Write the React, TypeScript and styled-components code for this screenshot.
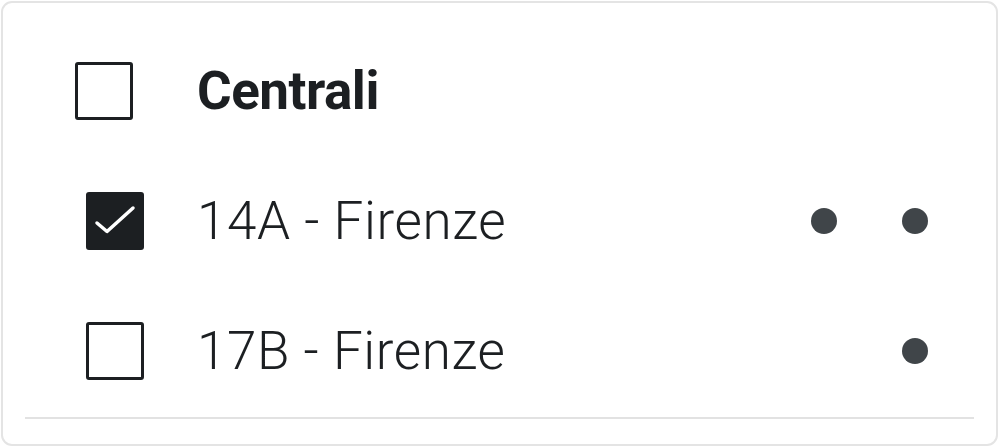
import React from "react";
import styled, { createGlobalStyle } from "styled-components";

const GlobalStyle = createGlobalStyle`
  html, body {
    margin: 0;
    padding: 0;
    background: #ffffff;
  }
  body {
    font-family: Roboto, "Noto Sans", sans-serif;
    color: #1c1f22;
  }
`;

const Card = styled.div`
  box-sizing: border-box;
  width: 997px;
  height: 445px;
  margin: 1px 2px 2px 1px;
  border: 2px solid #e4e4e4;
  border-radius: 11px;
  padding-top: 59px;
  display: flex;
  flex-direction: column;
`;

const List = styled.div`
  display: flex;
  flex-direction: column;
  gap: 72px;
`;

const Row = styled.div`
  display: flex;
  align-items: center;
  height: 58px;
  padding-right: 68px;
`;

const CheckCell = styled.div<{ $indent: number }>`
  box-sizing: border-box;
  width: 194px;
  flex: none;
  padding-left: ${(p) => p.$indent}px;
  display: flex;
  align-items: center;
`;

const Box = styled.div<{ $checked?: boolean }>`
  box-sizing: border-box;
  width: 58px;
  height: 58px;
  border: 3px solid #1c1f22;
  border-radius: 3px;
  background: ${(p) => (p.$checked ? "#1c1f22" : "#ffffff")};
  display: flex;
  align-items: center;
  justify-content: center;
`;

const Label = styled.span<{ $bold?: boolean }>`
  flex: 1;
  font-size: 53px;
  line-height: 58px;
  font-weight: ${(p) => (p.$bold ? 700 : 300)};
  letter-spacing: ${(p) => (p.$bold ? "-0.5px" : "0.6px")};
  white-space: nowrap;
`;

const Dots = styled.div`
  display: grid;
  grid-template-columns: 26px 26px;
  column-gap: 65px;
  align-items: center;
`;

const Dot = styled.span<{ $on: boolean }>`
  width: 26px;
  height: 26px;
  border-radius: 50%;
  background: ${(p) => (p.$on ? "#404549" : "transparent")};
`;

const Divider = styled.hr`
  margin: 37px 22px 0;
  border: none;
  height: 2px;
  background: #e2e2e2;
`;

function Check({ checked }: { checked?: boolean }) {
  return (
    <Box $checked={checked}>
      {checked && (
        <svg width="52" height="52" viewBox="0 0 52 52">
          <path
            d="M8 28 L18 36.5 L44 13"
            fill="none"
            stroke="#ffffff"
            strokeWidth="3.5"
            strokeLinecap="round"
            strokeLinejoin="round"
          />
        </svg>
      )}
    </Box>
  );
}

const centrali = [
  { name: "14A - Firenze", checked: true, dots: [true, true] },
  { name: "17B - Firenze", checked: false, dots: [false, true] },
];

export default function App() {
  return (
    <>
      <GlobalStyle />
      <Card>
        <List>
          <Row>
            <CheckCell $indent={72}>
              <Check />
            </CheckCell>
            <Label $bold>Centrali</Label>
          </Row>
          {centrali.map((c) => (
            <Row key={c.name}>
              <CheckCell $indent={83}>
                <Check checked={c.checked} />
              </CheckCell>
              <Label>{c.name}</Label>
              <Dots>
                {c.dots.map((on, i) => (
                  <Dot key={i} $on={on} />
                ))}
              </Dots>
            </Row>
          ))}
        </List>
        <Divider />
      </Card>
    </>
  );
}
